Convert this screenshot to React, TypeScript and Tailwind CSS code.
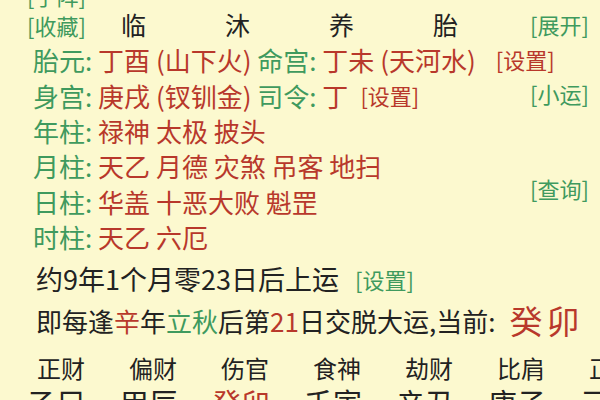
import React from 'react';

const green = 'text-[#3f9a5e]';
const red = 'text-[#b8382b]';

const pillars: { label: string; items: string }[] = [
  { label: '年柱', items: '禄神 太极 披头' },
  { label: '月柱', items: '天乙 月德 灾煞 吊客 地扫' },
  { label: '日柱', items: '华盖 十恶大败 魁罡' },
  { label: '时柱', items: '天乙 六厄' },
];

const stages = ['临', '沐', '养', '胎'];
const gods = ['正财', '偏财', '伤官', '食神', '劫财', '比肩', '正印'];
const luck = ['乙巳', '甲辰', '癸卯', '壬寅', '辛丑', '庚子', '己亥'];

function Row({ children }: { children: React.ReactNode }) {
  return <div className="h-[35.4px] flex items-center whitespace-pre">{children}</div>;
}

export default function App() {
  return (
    <div className="w-[600px] h-[400px] overflow-hidden bg-[#fcf9cf] text-[#222] font-['Noto_Sans_CJK_SC','Noto_Sans',sans-serif]">
      <div className="flex -mt-[18px]">
        {/* left: main rows */}
        <div className="flex-1 min-w-0 flex flex-col pl-[33px]">
          <div className={`h-[26px] flex items-center -ml-[6px] text-[22px] ${green}`}>[手阵]</div>
          <div className="h-[34px] flex items-center -ml-[6px] whitespace-nowrap">
            <span className={`text-[22px] w-[60px] ${green}`}>[收藏]</span>
            {stages.map((s) => (
              <span key={s} className="w-[104px] pl-[34px] text-[25px]">{s}</span>
            ))}
          </div>
          <Row>
            <span className={`text-[26px] ${green}`}>胎元: </span>
            <span className={`text-[26px] ${red}`}>丁酉 (山下火) </span>
            <span className={`text-[26px] ${green}`}>命宫: </span>
            <span className={`text-[26px] ${red}`}>丁未 (天河水)</span>
            <span className={`ml-[20px] text-[22px] ${red}`}>[设置]</span>
          </Row>
          <Row>
            <span className={`text-[26px] ${green}`}>身宫: </span>
            <span className={`text-[26px] ${red}`}>庚戌 (钗钏金) </span>
            <span className={`text-[26px] ${green}`}>司令: </span>
            <span className={`text-[26px] ${red}`}>丁</span>
            <span className={`ml-[12px] text-[22px] ${red}`}>[设置]</span>
          </Row>
          {pillars.map((p) => (
            <Row key={p.label}>
              <span className={`text-[26px] ${green}`}>{p.label}: </span>
              <span className={`text-[26px] ${red}`}>{p.items}</span>
            </Row>
          ))}
        </div>
        {/* right: action links */}
        <div className={`w-[70px] shrink-0 flex flex-col whitespace-nowrap text-[22px] ${green}`}>
          <span className="mt-[27px] h-[30px] leading-[30px]">[展开]</span>
          <span className="mt-[39px] h-[30px] leading-[30px]">[小运]</span>
          <span className="mt-[65px] h-[30px] leading-[30px]">[查询]</span>
        </div>
      </div>

      <div className="pl-[36px] mt-[4px] flex flex-col">
        <div className="h-[42px] flex items-center text-[27px] whitespace-pre">
          <span>约9年1个月零23日后上运</span>
          <span className={`ml-[16px] text-[22px] ${green}`}>[设置]</span>
        </div>
        <div className="h-[41px] flex items-center text-[26px] whitespace-pre">
          <span>即每逢</span>
          <span className={red}>辛</span>
          <span>年</span>
          <span className={green}>立秋</span>
          <span>后第</span>
          <span className={red}>21</span>
          <span>日交脱大运,当前:</span>
          <span className={`ml-[14px] text-[33px] tracking-[4px] ${red}`}>癸卯</span>
        </div>
      </div>

      <div className="flex pl-[37px] mt-[10px] h-[34px] items-center text-[24px] leading-none whitespace-nowrap">
        {gods.map((g) => (
          <span key={g} className="w-[92px] shrink-0">{g}</span>
        ))}
      </div>
      <div className="flex pl-[28px] text-[29px] leading-none pt-[3px] whitespace-nowrap">
        {luck.map((l, i) => (
          <span key={l} className={`w-[92px] shrink-0 ${i === 2 ? red : ''}`}>{l}</span>
        ))}
      </div>
    </div>
  );
}
